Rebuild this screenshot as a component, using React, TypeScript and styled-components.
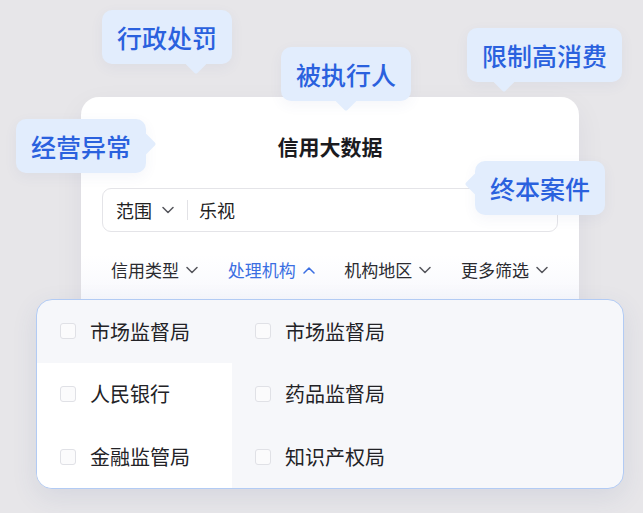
import React from "react";
import styled, { createGlobalStyle, css } from "styled-components";

const Global = createGlobalStyle`
  html, body { margin: 0; padding: 0; }
  body {
    font-family: "Noto Sans CJK SC", "Noto Sans", sans-serif;
    background: #e7e6e9;
  }
`;

const Page = styled.div`
  position: relative;
  width: 643px;
  height: 513px;
  overflow: hidden;
  background: #e7e6e9;
  padding: 97px 0 0 81px;
  box-sizing: border-box;
`;

const Card = styled.div`
  position: relative;
  width: 498px;
  box-sizing: border-box;
  padding: 35px 21px 70px;
  border-radius: 18px;
  background: linear-gradient(to bottom, #ffffff 0%, #ffffff 62%, #eef0fa 100%);
  box-shadow: 0 10px 30px rgba(40, 40, 80, 0.06);
  display: flex;
  flex-direction: column;
`;

const Title = styled.div`
  text-align: center;
  font-size: 21px;
  line-height: 28px;
  font-weight: 600;
  color: #1b1b1f;
`;

const SearchBox = styled.div`
  margin-top: 28px;
  height: 44px;
  box-sizing: border-box;
  border: 1px solid #e4e4e8;
  border-radius: 9px;
  background: #fff;
  display: flex;
  align-items: center;
  padding-left: 13px;
  font-size: 18px;
  color: #222;
`;

const Scope = styled.span`
  display: flex;
  align-items: center;
  gap: 10px;
`;

const Divider = styled.span`
  width: 1px;
  height: 20px;
  background: #e2e2e6;
  margin: 0 11px 0 13px;
`;

const FilterBar = styled.div`
  margin-top: 26px;
  padding: 0 10px 0 9px;
  display: flex;
  justify-content: space-between;
  align-items: center;
  height: 24px;
`;

const FilterItem = styled.div<{ $active?: boolean }>`
  display: flex;
  align-items: center;
  gap: 7px;
  font-size: 17px;
  line-height: 24px;
  color: ${(p) => (p.$active ? "#3a6ee2" : "#2b2b30")};
`;

const Dropdown = styled.div`
  position: absolute;
  top: 202px;
  left: -45px;
  width: 588px;
  height: 190px;
  box-sizing: border-box;
  border: 1px solid #b2cbf4;
  border-radius: 16px;
  background: #f6f7fa;
  overflow: hidden;
  display: grid;
  grid-template-columns: 195px 1fr;
  grid-template-rows: repeat(3, 1fr);
  box-shadow: 0 8px 26px rgba(60, 80, 140, 0.1);
`;

const Option = styled.div<{ $light?: boolean }>`
  display: flex;
  align-items: center;
  gap: 14px;
  padding-left: 23px;
  font-size: 20px;
  color: #222226;
  background: ${(p) => (p.$light ? "#ffffff" : "transparent")};
`;

const Check = styled.span`
  width: 16px;
  height: 16px;
  box-sizing: border-box;
  border: 1px solid #e0e1e6;
  border-radius: 3px;
  background: #fbfbfc;
`;

type Side = "down" | "left" | "right";

const tail = (side: Side, at: number) => {
  if (side === "down")
    return css`
      left: ${at - 8}px;
      bottom: -7px;
    `;
  if (side === "right")
    return css`
      right: -7px;
      top: ${at - 8}px;
    `;
  return css`
    left: -7px;
    top: ${at - 8}px;
  `;
};

const Bubble = styled.div<{ $x: number; $y: number; $side: Side; $at: number }>`
  position: absolute;
  left: ${(p) => p.$x}px;
  top: ${(p) => p.$y}px;
  height: 54px;
  padding: 0 15px;
  display: flex;
  align-items: center;
  border-radius: 10px;
  background: #e2edfd;
  color: #2a61de;
  font-size: 25px;
  font-weight: 500;
  white-space: nowrap;
  box-shadow: 0 4px 14px rgba(60, 90, 160, 0.06);
  z-index: 2;
  &::after {
    content: "";
    position: absolute;
    width: 16px;
    height: 16px;
    background: #e2edfd;
    border-radius: 2px;
    transform: rotate(45deg);
    ${(p) => tail(p.$side, p.$at)}
  }
`;

const BubbleText = styled.span`
  position: relative;
  z-index: 1;
`;

const Chevron = ({ up = false, color = "#55565c" }: { up?: boolean; color?: string }) => (
  <svg width="12" height="8" viewBox="0 0 12 8" fill="none">
    <polyline
      points={up ? "1,7 6,2 11,7" : "1,1.5 6,6.5 11,1.5"}
      stroke={color}
      strokeWidth="1.5"
      strokeLinecap="round"
      strokeLinejoin="round"
    />
  </svg>
);

const filters = [
  { label: "信用类型" },
  { label: "处理机构", active: true },
  { label: "机构地区" },
  { label: "更多筛选" },
];

const options = [
  { text: "市场监督局" },
  { text: "市场监督局" },
  { text: "人民银行", light: true },
  { text: "药品监督局" },
  { text: "金融监管局", light: true },
  { text: "知识产权局" },
];

const bubbles: { text: string; x: number; y: number; side: Side; at: number }[] = [
  { text: "行政处罚", x: 102, y: 10, side: "down", at: 94 },
  { text: "被执行人", x: 281, y: 47, side: "down", at: 65 },
  { text: "限制高消费", x: 467, y: 28, side: "down", at: 37 },
  { text: "经营异常", x: 16, y: 119, side: "right", at: 25 },
  { text: "终本案件", x: 475, y: 161, side: "left", at: 23 },
];

export default function App() {
  return (
    <>
      <Global />
      <Page>
        <Card>
          <Title>信用大数据</Title>
          <SearchBox>
            <Scope>
              范围
              <Chevron />
            </Scope>
            <Divider />
            <span>乐视</span>
          </SearchBox>
          <FilterBar>
            {filters.map((f) => (
              <FilterItem key={f.label} $active={f.active}>
                {f.label}
                <Chevron up={f.active} color={f.active ? "#3a6ee2" : "#55565c"} />
              </FilterItem>
            ))}
          </FilterBar>
          <Dropdown>
            {options.map((o, i) => (
              <Option key={i} $light={o.light}>
                <Check />
                {o.text}
              </Option>
            ))}
          </Dropdown>
        </Card>
        {bubbles.map((b) => (
          <Bubble key={b.text} $x={b.x} $y={b.y} $side={b.side} $at={b.at}>
            <BubbleText>{b.text}</BubbleText>
          </Bubble>
        ))}
      </Page>
    </>
  );
}
